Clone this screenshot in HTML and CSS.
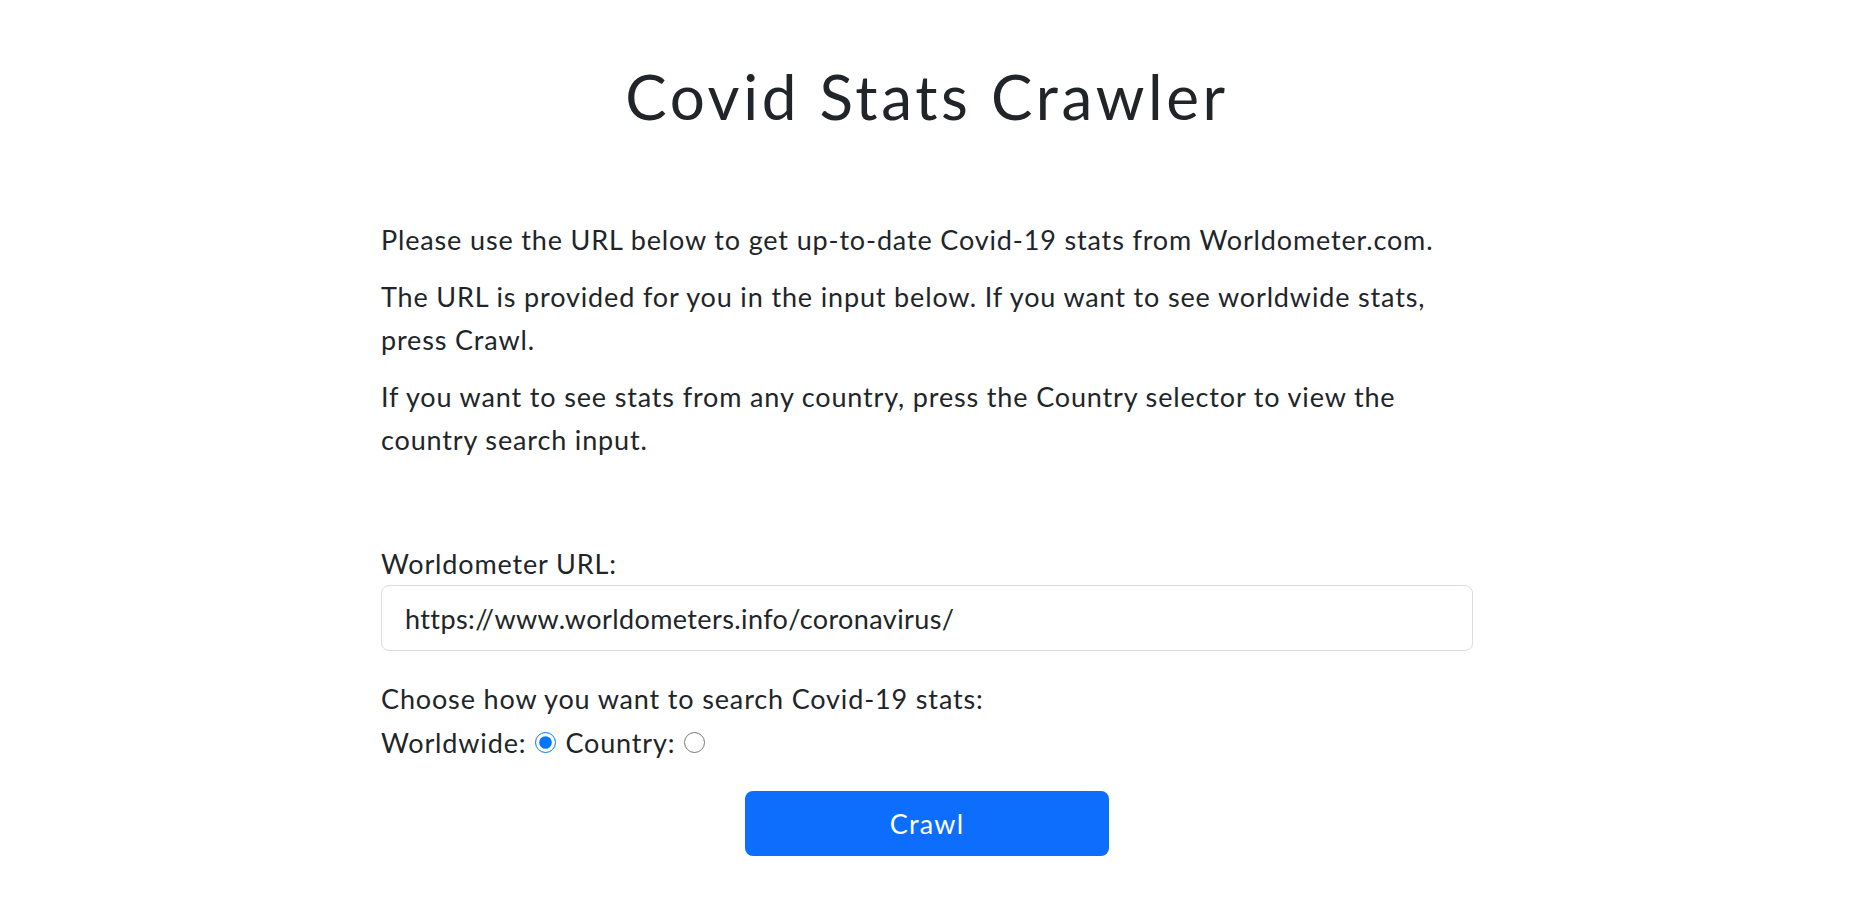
FILE: index.html
```html
<!DOCTYPE html>
<html lang="en">
<head>
<meta charset="utf-8">
<title>Covid Stats Crawler</title>
<link rel="stylesheet" href="styles.css">
</head>
<body>
<main class="page">
  <h1 class="title">Covid Stats Crawler</h1>
  <section class="intro">
    <p>Please use the URL below to get up-to-date Covid-19 stats from Worldometer.com.</p>
    <p>The URL is provided for you in the input below. If you want to see worldwide stats, press Crawl.</p>
    <p>If you want to see stats from any country, press the Country selector to view the country search input.</p>
  </section>
  <form class="crawl-form">
    <label class="field-label" for="url">Worldometer URL:</label>
    <input class="field-input" id="url" type="text" value="https://www.worldometers.info/coronavirus/">
    <div class="choice">
      <div>Choose how you want to search Covid-19 stats:</div>
      <div class="choice-row">
        <label for="ww">Worldwide:</label>
        <input class="radio" type="radio" id="ww" name="mode" checked>
        <label for="ct">Country:</label>
        <input class="radio" type="radio" id="ct" name="mode">
      </div>
    </div>
    <div class="actions">
      <button class="btn" type="button">Crawl</button>
    </div>
  </form>
</main>
</body>
</html>
```

FILE: styles.css
```css
html, body {
  margin: 0;
  padding: 0;
  background: #ffffff;
}

body {
  font-family: Lato, "Noto Sans", sans-serif;
  font-size: 27px;
  line-height: 43.5px;
  letter-spacing: 0.85px;
  color: #212529;
}

.page {
  width: 1092px;
  margin: 0 auto;
  padding: 59px 0 40px 3px;
  box-sizing: content-box;
}

.title {
  margin: 0;
  font-size: 62px;
  font-weight: 400;
  line-height: 74px;
  letter-spacing: 3.6px;
  text-align: center;
}

.intro {
  margin-top: 85px;
}

.intro p {
  margin: 0 0 13px;
}

.intro p:last-child {
  margin-bottom: 0;
}

.crawl-form {
  margin-top: 80px;
  display: flex;
  flex-direction: column;
}

.field-label {
  display: block;
  margin-bottom: 0;
}

.field-input {
  display: block;
  box-sizing: border-box;
  width: 100%;
  height: 66px;
  padding: 0 23px;
  font: inherit;
  letter-spacing: 0.4px;
  color: #212529;
  border: 1px solid #dadde1;
  border-radius: 8px;
  outline: none;
}

.choice {
  margin-top: 26px;
}

.choice-row {
  display: flex;
  align-items: center;
}

.radio {
  width: 21px;
  height: 21px;
  margin: 0 9px 0 9px;
}

.actions {
  display: flex;
  justify-content: center;
  margin-top: 27px;
}

.btn {
  width: 364px;
  height: 65px;
  border: none;
  border-radius: 8px;
  background: #0d6efd;
  color: #ffffff;
  font: inherit;
  letter-spacing: 1.2px;
  cursor: pointer;
}
```
